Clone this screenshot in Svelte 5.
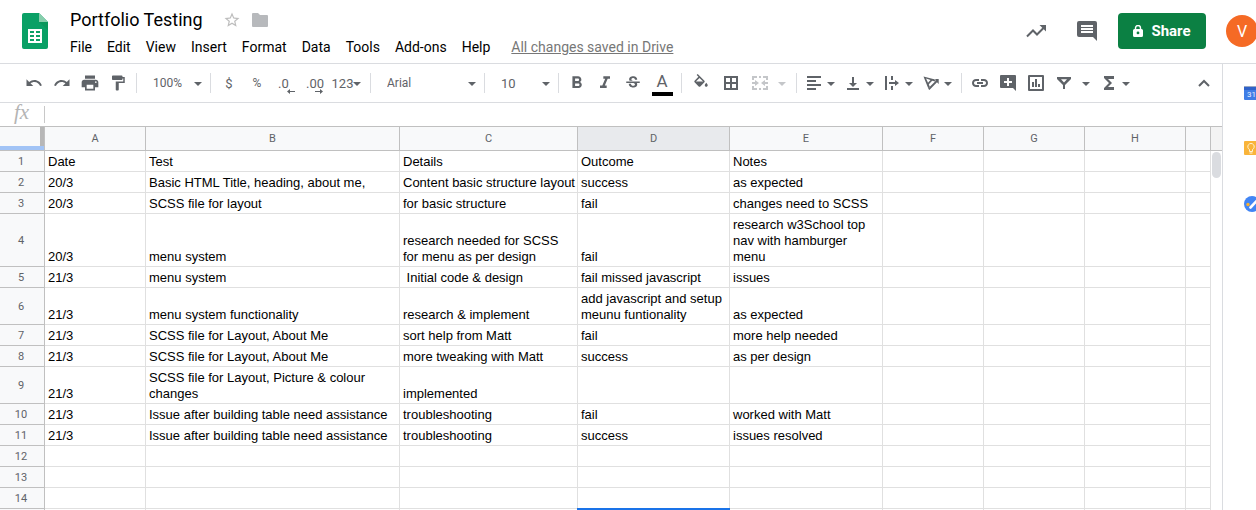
<script>
  const menus = ['File', 'Edit', 'View', 'Insert', 'Format', 'Data', 'Tools', 'Add-ons', 'Help'];

  const columns = [
    { name: 'A', width: 101 },
    { name: 'B', width: 254 },
    { name: 'C', width: 178 },
    { name: 'D', width: 152 },
    { name: 'E', width: 153 },
    { name: 'F', width: 101 },
    { name: 'G', width: 101 },
    { name: 'H', width: 101 },
    { name: '', width: null }
  ];

  const data = [
    ['Date', 'Test', 'Details', 'Outcome', 'Notes'],
    ['20/3', 'Basic HTML Title, heading, about me,', 'Content basic structure layout', 'success', 'as expected'],
    ['20/3', 'SCSS file for layout', 'for basic structure', 'fail', 'changes need to SCSS'],
    ['20/3', 'menu system', 'research needed for SCSS\nfor menu as per design', 'fail', 'research w3School top\nnav with hamburger\nmenu'],
    ['21/3', 'menu system', ' Initial code & design', 'fail missed javascript', 'issues'],
    ['21/3', 'menu system functionality', 'research & implement', 'add javascript and setup\nmeunu funtionality', 'as expected'],
    ['21/3', 'SCSS file for Layout, About Me', 'sort help from Matt', 'fail', 'more help needed'],
    ['21/3', 'SCSS file for Layout, About Me', 'more tweaking with Matt', 'success', 'as per design'],
    ['21/3', 'SCSS file for Layout, Picture & colour\nchanges', 'implemented', '', ''],
    ['21/3', 'Issue after building table need assistance', 'troubleshooting', 'fail', 'worked with Matt'],
    ['21/3', 'Issue after building table need assistance', 'troubleshooting', 'success', 'issues resolved'],
    [], [], []
  ];

  const activeCol = 3;

  const icons = {
    undo: 'M12.5 8c-2.65 0-5.05.99-6.9 2.6L2 7v9h9l-3.62-3.62c1.39-1.16 3.16-1.88 5.12-1.88 3.54 0 6.55 2.31 7.6 5.5l2.37-.78C21.08 11.03 17.15 8 12.5 8z',
    redo: 'M18.4 10.6C16.55 8.99 14.15 8 11.5 8c-4.65 0-8.58 3.03-9.96 7.22L3.9 16c1.05-3.19 4.05-5.5 7.6-5.5 1.95 0 3.73.72 5.12 1.88L13 16h9V7l-3.6 3.6z',
    print: 'M19 8H5c-1.66 0-3 1.34-3 3v6h4v4h12v-4h4v-6c0-1.66-1.34-3-3-3zm-3 11H8v-5h8v5zm3-7c-.55 0-1-.45-1-1s.45-1 1-1 1 .45 1 1-.45 1-1 1zm-1-9H6v4h12V3z',
    paint: 'M18 4V3c0-.55-.45-1-1-1H5c-.55 0-1 .45-1 1v4c0 .55.45 1 1 1h12c.55 0 1-.45 1-1V6h1v4H9v11c0 .55.45 1 1 1h2c.55 0 1-.45 1-1v-9h8V4h-3z',
    bold: 'M15.600 10.790c.97-.67 1.650-1.770 1.650-2.790 0-2.260-1.750-4-4-4H6.500v14h7.540c2.090 0 3.710-1.700 3.710-3.790 0-1.520-.86-2.820-2.150-3.420zM9.700 6.500h3.300c.83 0 1.500.67 1.500 1.500s-.67 1.500-1.500 1.500H9.700v-3zm3.800 9H9.700v-3h3.800c.83 0 1.500.67 1.500 1.500s-.67 1.500-1.500 1.500z',
    italic: 'M10 4v3h2.21l-3.42 8H6v3h8v-3h-2.21l3.42-8H18V4z',
    strike: 'M7.24 8.75c-.26-.48-.39-1.03-.39-1.67 0-.61.13-1.16.4-1.67.26-.5.63-.93 1.11-1.29.48-.35 1.05-.63 1.7-.83.66-.19 1.39-.29 2.18-.29.81 0 1.54.11 2.21.34.66.22 1.23.54 1.69.94.47.4.83.88 1.08 1.43.25.55.38 1.15.38 1.81h-3.01c0-.31-.05-.59-.15-.85-.09-.27-.24-.49-.44-.68-.2-.19-.45-.33-.75-.44-.3-.1-.66-.16-1.06-.16-.39 0-.74.04-1.03.13-.29.09-.53.21-.72.36-.19.16-.34.34-.44.55-.1.21-.15.43-.15.66 0 .48.25.88.74 1.21.38.25.77.48 1.41.7H7.39c-.05-.08-.11-.17-.15-.25zM21 12v-2H3v2h9.62c.18.07.4.14.55.2.37.17.66.34.87.51.21.17.35.36.43.57.07.2.11.43.11.69 0 .23-.05.45-.14.66-.09.2-.23.38-.42.53-.19.15-.42.26-.71.35-.29.08-.63.13-1.01.13-.43 0-.83-.04-1.18-.13s-.66-.23-.91-.42c-.25-.19-.45-.44-.59-.75-.14-.31-.25-.76-.25-1.21H6.4c0 .55.08 1.13.24 1.58.16.45.37.85.65 1.21.28.35.6.66.98.92.37.26.78.48 1.22.65.44.17.9.3 1.38.39.48.08.96.13 1.44.13.8 0 1.53-.09 2.18-.28s1.21-.45 1.67-.79c.46-.34.82-.77 1.07-1.27s.38-1.07.38-1.71c0-.6-.1-1.14-.31-1.61-.05-.11-.11-.23-.17-.33H21z',
    fill: 'M16.56 8.94L7.62 0 6.21 1.41l2.38 2.38-5.15 5.15c-.59.59-.59 1.54 0 2.12l5.5 5.5c.29.29.68.44 1.06.44s.77-.15 1.06-.44l5.5-5.5c.59-.58.59-1.53 0-2.12zM5.21 10L10 5.21 14.79 10H5.21zM19 11.500s-2 2.170-2 3.500c0 1.100.9 2 2 2s2-.9 2-2c0-1.330-2-3.500-2-3.500z'
  };

  /* Drawn on an 18-unit grid so that the edges fall on whole pixels. */
  const pixelIcons = {
    borders: 'M2 2v14h14V2H2zm6 12H4v-4h4v4zm0-6H4V4h4v4zm6 6h-4v-4h4v4zm0-6h-4V4h4v4z',
    merge: 'M1 2h5v2H3v2H1V2zm7 0h2v2H8V2zm4 0h5v4h-2V4h-3V2zM1 12h2v2h3v2H1v-4zm7 2h2v2H8v-2zm7-2h2v4h-5v-2h3v-2zM1 8h3V6l4 3-4 3v-2H1V8zm16 0v2h-3v2l-4-3 4-3v2h3z',
    align: 'M2 2h14v2H2zM2 6h9v2H2zM2 10h14v2H2zM2 14h9v2H2z',
    valign: 'M8 3h2v6h3l-4 4-4-4h3zM3 14h12v2H3z',
    wrap: 'M2 2h2v14H2zM8 2h2v4H8zM8 12h2v4H8zM6 8h6V6l4 3-4 3v-2H6z',
    rotate: 'M1.500 2.500L14 5.800l-1 1.700-2.800-.8-3.400 3.500 1 2.900-1.500 1.300L1.500 2.500zm2.600 2l1.900 4.200 2.500-2.800-4.400-1.400zM11.700 5h5v5l-1.700-1.700-7.600 7.700-1.400-1.400 7.600-7.700z',
    link: 'M1 9c0-2.500 2-4 4-4h3v2H5C4 7 3 7.800 3 9s1 2 2 2h3v2H5c-2 0-4-1.500-4-4zm5-1h6v2H6zm4-3h3c2 0 4 1.500 4 4s-2 4-4 4h-3v-2h3c1 0 2-.8 2-2s-1-2-2-2h-3z',
    addComment: 'M2 1h14a1 1 0 0 1 1 1v15l-3-3H2a1 1 0 0 1-1-1V2a1 1 0 0 1 1-1zm6 3v3H5v2h3v3h2V9h3V7h-3V4z',
    chart: 'M2 1h14a1 1 0 0 1 1 1v14a1 1 0 0 1-1 1H2a1 1 0 0 1-1-1V2a1 1 0 0 1 1-1zm1 2v12h12V3zM5 8h2v5H5zM8 5h2v8H8zM11 10h2v3h-2z',
    filter: 'M2 3h14v2l-6 6v4H8v-4L2 5V3zm4 2.200l3 3.200 3-3.200z',
    sum: 'M4 2h10v3h-6l4 4-4 4h6v3H4v-2l5-5-5-5z'
  };
</script>

{#snippet icon(name, size = 18)}
  {#if pixelIcons[name]}
    <svg viewBox="0 0 18 18" width="18" height="18" fill="currentColor" fill-rule="evenodd" aria-hidden="true"><path d={pixelIcons[name]} /></svg>
  {:else}
    <svg viewBox="0 0 24 24" width={size} height={size} fill="currentColor" fill-rule="evenodd" aria-hidden="true"><path d={icons[name]} /></svg>
  {/if}
{/snippet}

{#snippet arrow()}
  <svg class="arrow" viewBox="0 0 8 4" width="8" height="4" fill="currentColor" aria-hidden="true"><path d="M0 0h8L4 4z" /></svg>
{/snippet}

{#snippet tool(name, label, size)}
  <button class="tool" aria-label={label}>{@render icon(name, size)}</button>
{/snippet}

{#snippet menuTool(name, label)}
  <button class="tool drop" aria-label={label}>{@render icon(name)}{@render arrow()}</button>
{/snippet}

<div class="app">
  <header>
    <svg class="logo" viewBox="0 0 26 36" width="26" height="36" aria-hidden="true">
      <path fill="#0aa066" d="M2 0h15l9 9v25a2 2 0 0 1-2 2H2a2 2 0 0 1-2-2V2a2 2 0 0 1 2-2z" />
      <path fill="#0b8a4c" d="M17 9h9v8z" opacity=".4" />
      <path fill="#87ceac" d="M17 0l9 9h-9z" />
      <path fill="#fff" fill-rule="evenodd" d="M6 16h14v14H6zm2 2v2h4v-2zm6 0v2h4v-2zm-6 4v2h4v-2zm6 0v2h4v-2zm-6 4v2h4v-2zm6 0v2h4v-2z" />
    </svg>
    <div class="heading">
      <div class="title-row">
        <h1>Portfolio Testing</h1>
        <button class="bare star" aria-label="Star">
          <svg viewBox="0 0 24 24" width="18" height="18" fill="currentColor"><path d="M22 9.240l-7.190-.62L12 2 9.190 8.630 2 9.240l5.460 4.730L5.820 21 12 17.270 18.180 21l-1.630-7.030L22 9.240zM12 15.400l-3.760 2.270 1-4.280-3.320-2.880 4.380-.38L12 6.100l1.710 4.040 4.380.38-3.320 2.880 1 4.280L12 15.400z" /></svg>
        </button>
        <button class="bare folder" aria-label="Move to folder">
          <svg viewBox="0 0 16 14" width="16" height="14" fill="currentColor"><path d="M1 0h5l2 2h7a1 1 0 0 1 1 1v10a1 1 0 0 1-1 1H1a1 1 0 0 1-1-1V1a1 1 0 0 1 1-1z" /></svg>
        </button>
      </div>
      <nav>
        {#each menus as menu}
          <button class="bare">{menu}</button>
        {/each}
        <a href="#history">All changes saved in Drive</a>
      </nav>
    </div>
    <div class="actions">
      <button class="bare" aria-label="Activity">
        <svg viewBox="0 0 20 13" width="20" height="13" fill="none" stroke="currentColor" stroke-width="2"><path d="M1 11.500l6-6 4 4L17.500 3" /><path d="M13.500 0H20v6.500z" fill="currentColor" stroke="none" /></svg>
      </button>
      <button class="bare" aria-label="Comments">
        <svg viewBox="0 0 20 20" width="20" height="20" fill="currentColor"><path fill-rule="evenodd" d="M2 0h16a2 2 0 0 1 2 2v18l-4-4H2a2 2 0 0 1-2-2V2a2 2 0 0 1 2-2zm2 4v2h12V4zm0 3v2h12V7zm0 3v2h12v-2z" /></svg>
      </button>
      <button class="share">
        <svg viewBox="0 0 10 12" width="10" height="12" aria-hidden="true"><path d="M2.500 5V3a2.500 2.500 0 0 1 5 0v2" fill="none" stroke="#fff" stroke-width="1.400" /><path fill="#fff" fill-rule="evenodd" d="M1.500 4h7A1.500 1.500 0 0 1 10 5.500v5A1.500 1.500 0 0 1 8.500 12h-7A1.500 1.500 0 0 1 0 10.500v-5A1.500 1.500 0 0 1 1.500 4zM5 6.500a1.400 1.400 0 1 0 0 2.800 1.400 1.400 0 0 0 0-2.800z" /></svg>
        Share
      </button>
      <button class="avatar" aria-label="Account">V</button>
    </div>
  </header>

  <div class="body">
    <main>
      <div class="toolbar" role="toolbar" aria-label="Formatting">
        {@render tool('undo', 'Undo', 18)}
        {@render tool('redo', 'Redo', 18)}
        {@render tool('print', 'Print', 20)}
        {@render tool('paint', 'Paint format', 18)}
        <span class="sep"></span>
        <label class="pick zoom"><select aria-label="Zoom"><option>100%</option></select>{@render arrow()}</label>
        <span class="sep"></span>
        <button class="tool">$</button>
        <button class="tool small">%</button>
        <button class="tool decimal" aria-label="Decrease decimal places">.0
          <svg viewBox="0 0 8 5" width="8" height="5" fill="currentColor"><path d="M0 2.500L3 0v2h5v1H3v2z" /></svg>
        </button>
        <button class="tool decimal" aria-label="Increase decimal places">.00
          <svg viewBox="0 0 8 5" width="8" height="5" fill="currentColor"><path d="M8 2.500L5 0v2H0v1h5v2z" /></svg>
        </button>
        <button class="tool formats">123{@render arrow()}</button>
        <span class="sep"></span>
        <label class="pick font"><select aria-label="Font"><option>Arial</option></select>{@render arrow()}</label>
        <span class="sep"></span>
        <label class="pick size"><select aria-label="Font size"><option>10</option></select>{@render arrow()}</label>
        <span class="sep"></span>
        {@render tool('bold', 'Bold', 20)}
        {@render tool('italic', 'Italic', 20)}
        {@render tool('strike', 'Strikethrough', 18)}
        <button class="tool wide color" aria-label="Text color"><span>A</span></button>
        <span class="sep"></span>
        <button class="tool wide" aria-label="Fill color">{@render icon('fill')}</button>
        <button class="tool wide" aria-label="Borders">{@render icon('borders')}</button>
        <button class="tool drop spaced" disabled aria-label="Merge cells">{@render icon('merge')}{@render arrow()}</button>
        <span class="sep"></span>
        {@render menuTool('align', 'Horizontal align')}
        {@render menuTool('valign', 'Vertical align')}
        {@render menuTool('wrap', 'Text wrapping')}
        {@render menuTool('rotate', 'Text rotation')}
        <span class="sep"></span>
        {@render tool('link', 'Insert link')}
        {@render tool('addComment', 'Insert comment')}
        {@render tool('chart', 'Insert chart')}
        <button class="tool drop spaced" aria-label="Create a filter">{@render icon('filter')}{@render arrow()}</button>
        {@render menuTool('sum', 'Functions')}
        <button class="tool collapse" aria-label="Hide the menus">
          <svg viewBox="0 0 12 8" width="12" height="8" fill="none" stroke="currentColor" stroke-width="2"><path d="M1 7l5-5 5 5" /></svg>
        </button>
      </div>

      <label class="formula"><span class="fx">fx</span><input type="text" aria-label="Formula" /></label>

      <div class="sheet">
        <table>
          <colgroup>
            <col style="width: 45px" />
            {#each columns as c}
              <col style={c.width ? `width: ${c.width}px` : ''} />
            {/each}
          </colgroup>
          <thead>
            <tr>
              <td class="corner"></td>
              {#each columns as c, i}
                <th scope="col" class:on={i === activeCol}>{c.name}</th>
              {/each}
            </tr>
          </thead>
          <tbody>
            {#each data as row, r}
              <tr>
                <th scope="row">{r + 1}</th>
                {#each columns as c, i}
                  <td>{row[i] ?? ''}</td>
                {/each}
              </tr>
            {/each}
            <tr>
              <th></th>
              {#each columns as c, i}
                <td class:active={i === activeCol}></td>
              {/each}
            </tr>
          </tbody>
        </table>
        <div class="scroll"><div class="thumb"></div></div>
      </div>
    </main>

    <aside>
      <button class="bare" aria-label="Calendar">
        <svg viewBox="0 0 16 14" width="16" height="14"><path fill="#2f62c9" d="M0 0h16v4H0z" /><path fill="#9aa9c4" d="M0 0h16v1H0z" /><path fill="#3f7de6" d="M0 4h16v9a1 1 0 0 1-1 1H1a1 1 0 0 1-1-1z" /><text x="3" y="11" fill="#e8f0fe" font-family="Roboto, sans-serif" font-size="8">31</text></svg>
      </button>
      <button class="bare" aria-label="Keep">
        <svg viewBox="0 0 16 14" width="16" height="14"><path fill="#f9b43a" d="M1 0h14a1 1 0 0 1 1 1v9l-4 4H1a1 1 0 0 1-1-1V1a1 1 0 0 1 1-1z" /><path fill="#e29a1d" d="M12 14v-4h4z" /><path fill="none" stroke="#fff3d6" d="M5.500 8.500a3.200 3.200 0 1 1 3 0v2h-3zM5.500 12h3" /></svg>
      </button>
      <button class="bare" aria-label="Tasks">
        <svg viewBox="0 0 16 16" width="16" height="16"><circle cx="8" cy="8" r="8" fill="#4285f4" /><path stroke="#fff" stroke-width="2.600" stroke-linecap="round" d="M6.500 11.500L13 4.500" /><circle cx="4" cy="8.500" r="1.700" fill="#fbb02c" /></svg>
      </button>
    </aside>
  </div>
</div>

<style>
  :global(body) { margin: 0; background: #fff; overflow: hidden; }

  .app { display: flex; flex-direction: column; height: 100vh; overflow: hidden; font-family: Roboto, sans-serif; color: #000; }

  button, select, input { font: inherit; color: inherit; background: none; border: 0; padding: 0; margin: 0; }
  svg { display: block; flex: none; }

  header { display: flex; align-items: flex-start; padding-left: 22px; height: 63px; flex: none; border-bottom: 1px solid #dadce0; }
  .logo { margin-top: 13px; }
  .heading { display: flex; flex-direction: column; gap: 3px; padding: 8px 0 0 22px; }
  .title-row { display: flex; align-items: center; height: 24px; }
  h1 { margin: 0 20px 0 0; font-size: 18px; font-weight: 400; line-height: 24px; }
  .star { color: #bdbdbd; margin-right: 11px; }
  .folder { color: #b7b9bc; }
  nav { display: flex; align-items: center; gap: 15px; height: 24px; font-size: 14px; white-space: nowrap; }
  nav a { margin-left: 6px; color: #777; }

  .actions { display: flex; align-items: center; gap: 20px; height: 62px; margin-left: auto; color: #5f6368; }
  .actions .bare { margin-right: 11px; }
  .actions .bare + .bare { margin-right: 1px; }
  .share { display: flex; align-items: center; justify-content: center; gap: 8px; width: 88px; height: 36px; border-radius: 4px; background: #0b8043; color: #fff; font-size: 15px; font-weight: 700; }
  .avatar { width: 32px; height: 32px; margin-right: -2px; border-radius: 50%; background: #f56a25; color: #fff; font-size: 16px; }

  .body { display: flex; flex: 1; min-height: 0; }
  main { flex: 1; min-width: 0; display: flex; flex-direction: column; }

  .toolbar { display: flex; align-items: center; flex: none; height: 38px; padding: 0 4px 0 20px; border-bottom: 1px solid #dadce0; color: #5f6368; font-size: 13px; }
  .sep { width: 1px; height: 20px; margin: 0 4px; background: #dadce0; }
  .tool { display: flex; align-items: center; justify-content: center; width: 28px; height: 28px; flex: none; color: #5f6368; }
  .tool.wide { width: 30px; }
  .tool.small { font-size: 12px; }
  .tool.drop { width: 39px; gap: 4px; padding-right: 1px; }
  .tool.spaced { width: 46px; gap: 9px; }
  .tool:disabled { color: #c4c6c9; }
  .arrow { margin-top: 2px; }
  .tool.decimal { position: relative; justify-content: flex-start; padding-left: 7px; }
  .decimal svg { position: absolute; right: 4px; bottom: 3px; }
  .tool.formats { width: 39px; }
  .color span { width: 21px; height: 20px; border-bottom: 4px solid #000; font-size: 17px; line-height: 18px; margin-top: 2px; }
  .collapse { margin-left: auto; }

  .pick { position: relative; display: flex; align-items: center; }
  .pick select { appearance: none; width: 100%; height: 28px; padding-left: 12px; outline: none; }
  .pick .arrow { position: absolute; right: 4px; pointer-events: none; }
  .zoom { width: 65px; font-size: 12px; }
  .font { width: 105px; font-size: 12px; }
  .size { width: 65px; }

  .formula { display: flex; align-items: center; flex: none; height: 23px; border-bottom: 1px solid #c0c0c0; }
  .fx { width: 44px; box-sizing: border-box; padding: 0 0 4px 14px; color: #b4b4b4; font: italic 21px/19px "Liberation Serif", serif; }
  .formula input { flex: 1; height: 17px; padding: 0 4px; border-left: 1px solid #c8c8c8; outline: none; font-size: 13px; }

  .sheet { display: flex; flex: 1; min-height: 0; overflow: hidden; align-items: stretch; }
  table { flex: 1; width: 0; align-self: flex-start; table-layout: fixed; border-collapse: separate; border-spacing: 0; font: 13px/16px "Liberation Sans", Arial, sans-serif; }
  td, th { box-sizing: border-box; border: 0 solid #e0e0e0; border-width: 0 1px 1px 0; }
  td { height: 21px; padding: 3px 3px 1px; vertical-align: bottom; white-space: pre; }
  th { padding: 0; font: 400 11px/16px Roboto, sans-serif; color: #5f6368; background: #f8f9fa; border-color: #c0c0c0; vertical-align: middle; }
  tbody th { padding: 1px 2px 0 0; }
  thead th { height: 24px; }
  th.on { background: #e8eaed; }
  .corner { height: 24px; background: linear-gradient(#a2c4f6, #a2c4f6) 0 100% / 100% 4px no-repeat, linear-gradient(#b7b7b7, #b7b7b7) 100% 0 / 4px 100% no-repeat, #f8f9fa; border-color: #c0c0c0; }
  .active { position: relative; }
  .active::after { content: ""; position: absolute; inset: -1px; border: 2px solid #1a73e8; }

  .scroll { width: 11px; flex: none; }
  .scroll::before { content: ""; display: block; height: 23px; background: #f3f3f3; border-bottom: 1px solid #c0c0c0; }
  .thumb { width: 9px; height: 26px; margin: 1px; border-radius: 5px; background: #dadce0; }

  aside { display: flex; flex-direction: column; align-items: flex-start; gap: 41px; width: 12px; flex: none; padding: 22px 0 0 21px; overflow: hidden; border-left: 1px solid #dadce0; }
</style>
